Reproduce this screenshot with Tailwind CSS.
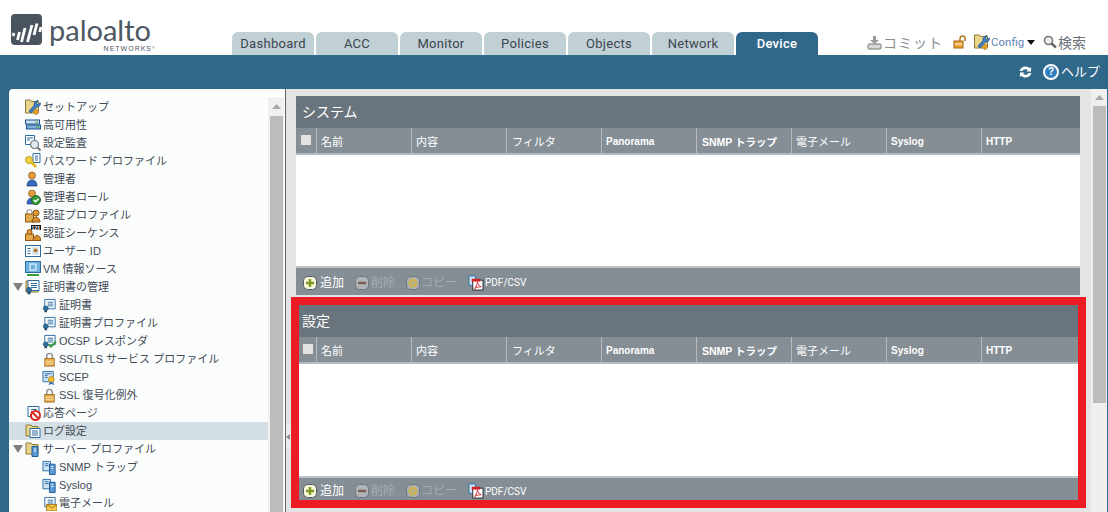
<!DOCTYPE html>
<html lang="ja">
<head>
<meta charset="utf-8"/>
<title>Device</title>
<script src="https://cdn.jsdelivr.net/npm/@tailwindcss/browser@4"></script>
</head>
<body class="w-[1108px] h-[512px] overflow-hidden bg-white font-['Liberation_Sans','Noto_Sans_CJK_JP',sans-serif] text-[11px] text-[#333]">
<svg class="hidden" width="0" height="0">
  <symbol id="folder" viewBox="0 0 16 16"><path d="M1 2h5l1 1.500h6V13H1z" fill="#e8d48a" stroke="#8a7a3a"/></symbol>
  <symbol id="wrench" viewBox="0 0 16 16"><path d="M.5 1h5l1 1.500h7V14H.5z" fill="#e8d48a" stroke="#8a7a3a"/><path d="M13 1.500l-1.500 3 1 1 3-1.500c0 3-2 4.500-4 4L6 14l-2-2 5-5.500C8.500 4 10.500 1.500 13 1.500z" fill="#3f7fc4" stroke="#1d4f8c" stroke-width=".7"/><path d="M8 13l3-3 3 3-3 3z" fill="#e3a021" stroke="#9a6b1e" stroke-width=".5"/></symbol>
  <symbol id="doc" viewBox="0 0 16 16"><path d="M3 1.500h11v10H3z" fill="#fff" stroke="#2b6ca3"/><path d="M6 4.500h6M6 6.500h6M6 8.500h6" stroke="#2b6ca3"/></symbol>
  <symbol id="cert" viewBox="0 0 16 16"><use href="#doc"/><circle cx="4" cy="11" r="2.600" fill="#2d6f9e" stroke="#173f60" stroke-width=".6"/><path d="M3 13l-.5 2.500L4 15l1.500.5L5 13" fill="#173f60"/></symbol>
  <symbol id="person" viewBox="0 0 16 16"><circle cx="7" cy="4.500" r="3.500" fill="#e39a3b" stroke="#8a5517" stroke-width=".7"/><path d="M2 15c0-4 2-6 5-6s5 2 5 6z" fill="#3668b8" stroke="#1e3f77" stroke-width=".7"/></symbol>
  <symbol id="lock" viewBox="0 0 16 16"><path d="M5 7V4.500a3 3 0 016 0V7" fill="none" stroke="#8b8b8b" stroke-width="1.500"/><rect x="3" y="7" width="10" height="8" fill="#eab04a" stroke="#9a6b1e"/><path d="M3.500 10h9M3.500 12.500h9" stroke="#fff" stroke-opacity=".6"/></symbol>
  <symbol id="server" viewBox="0 0 16 16"><path d="M1 1.500h8v10H1z" fill="#cfe3f5" stroke="#2b6ca3"/><path d="M3 4h4M3 6h4" stroke="#2b6ca3"/><path d="M8 4.500h6v11H8z" fill="#5b9bd5" stroke="#1f5a92"/><path d="M10 7h2M10 9h2" stroke="#fff"/></symbol>
  <symbol id="tri" viewBox="0 0 10 8"><path d="M0 0h10L5 8z" fill="#7f7f7f"/></symbol>
  <symbol id="plus" viewBox="0 0 14 14"><rect x=".5" y=".5" width="13" height="13" rx="4" fill="#f7f4dc" stroke="#4e5a66"/><path d="M7 3v8M3 7h8" stroke="#7a9a1c" stroke-width="2.400"/></symbol>
  <symbol id="minus" viewBox="0 0 14 14"><rect x=".5" y=".5" width="13" height="13" rx="4" fill="#b0b4b8" stroke="#6d7680"/><path d="M3 7h8" stroke="#7b5c50" stroke-width="2.400"/></symbol>
  <symbol id="copy" viewBox="0 0 14 14"><rect x=".5" y=".5" width="13" height="13" rx="4" fill="#a9adb0" stroke="#6d7680"/><circle cx="7" cy="7" r="4.500" fill="#cdb45a"/><circle cx="7" cy="7" r="1.500" fill="#a9adb0"/></symbol>
  <symbol id="pdf" viewBox="0 0 17 16"><path d="M1 .5h7v10H1z" fill="#cfe3f5" stroke="#2b6ca3"/><path d="M5 5h11v10.500H5z" fill="#fff" stroke="#222"/><path d="M4 3.500h9v3H4z" fill="#d3222a"/><path d="M7 14c2-3 3-5 3-7 1 3 2 4 4 5-3 0-5 .5-7 2z" fill="none" stroke="#d3222a"/></symbol>
</svg>

<!-- top bar -->
<header class="h-[55px] flex relative">
  <div class="w-[232px] shrink-0 flex pl-[11px] pt-[14px] gap-[7px]">
    <svg class="w-[31px] h-[31px]" viewBox="0 0 31 31"><rect width="31" height="31" rx="4" fill="#4a545e"/><g stroke="#fff" stroke-width="2.800"><path d="M3 19l-1 3M8.500 18l-2 8M14 14l-3.500 14M21 11l-4.500 17M26 9.500l-3 11.500M30 13l-1.300 5"/></g></svg>
    <div class="flex flex-col items-end">
      <span class="font-['Lato',sans-serif] text-[29px] leading-[29px] mt-[1px] text-[#4d5862]">paloalto</span>
      <span class="text-[7px] leading-[7px] mt-[1px] mr-[-5px] tracking-[1px] text-[#4d5862]">NETWORKS<sup class="text-[4px]">®</sup></span>
    </div>
  </div>
  <nav class="flex gap-[2px] items-end font-['Roboto',sans-serif] text-[13px] tracking-[0.3px] text-[#3c4650]">
    <a class="w-[82px] h-[23px] rounded-t-[6px] bg-[#c0d0d5] flex items-center justify-center">Dashboard</a>
    <a class="w-[82px] h-[23px] rounded-t-[6px] bg-[#c0d0d5] flex items-center justify-center">ACC</a>
    <a class="w-[82px] h-[23px] rounded-t-[6px] bg-[#c0d0d5] flex items-center justify-center">Monitor</a>
    <a class="w-[82px] h-[23px] rounded-t-[6px] bg-[#c0d0d5] flex items-center justify-center">Policies</a>
    <a class="w-[82px] h-[23px] rounded-t-[6px] bg-[#c0d0d5] flex items-center justify-center">Objects</a>
    <a class="w-[82px] h-[23px] rounded-t-[6px] bg-[#c0d0d5] flex items-center justify-center">Network</a>
    <a class="w-[82px] h-[23px] rounded-t-[6px] bg-[#30688a] text-white font-medium flex items-center justify-center">Device</a>
  </nav>
  <div class="flex items-end pb-[2px] ml-[49px] h-[55px] text-[#8b8f93]">
    <svg class="w-[15px] h-[15px] mb-[3px]" viewBox="0 0 15 15"><path d="M6 1h3v4h3L7.500 9 3 5h3z" fill="#9a9a9a"/><rect x="1" y="9" width="13" height="5" rx="1" fill="#d8d8d8" stroke="#777"/></svg>
    <span class="text-[14px] leading-[20px] w-[68px] ml-[1px] tracking-[1px]">コミット</span>
    <svg class="w-[14px] h-[14px] mb-[4px] ml-[2px]" viewBox="0 0 14 14"><path d="M7 6V3.500a2.500 2.500 0 015 0V6" fill="none" stroke="#b07a22" stroke-width="1.500"/><rect x="1" y="6" width="9" height="7" fill="#f0a32c" stroke="#a5661a"/><path d="M2 9h7" stroke="#fff"/></svg>
    <svg class="w-[16px] h-[16px] mb-[3px] ml-[7px]"><use href="#wrench"/></svg>
    <span class="font-['Roboto',sans-serif] text-[11.500px] leading-[20px] ml-[1px] text-[#5f86b5] w-[33px] mb-[1px]">Config</span>
    <svg class="w-[8px] h-[5px] mb-[8px] ml-[3px]" viewBox="0 0 8 5"><path d="M0 0h8L4 5z" fill="#111"/></svg>
    <svg class="w-[14px] h-[14px] mb-[4px] ml-[8px]" viewBox="0 0 14 14"><circle cx="5.500" cy="5.500" r="4" fill="#e8eef2" stroke="#777" stroke-width="1.600"/><path d="M8.500 8.500l4.500 4" stroke="#666" stroke-width="2.400"/></svg>
    <span class="text-[14px] leading-[20px] ml-[1px] text-[#6a7178]">検索</span>
  </div>
</header>

<!-- blue bar -->
<div class="h-[34px] bg-[#30688a] flex items-center justify-end pr-[8px] pb-[1px] gap-[11px] text-white">
  <svg class="w-[13px] h-[12px]" viewBox="0 0 14 12"><path d="M7 0c2 0 3.500.8 4.500 2L13 .500V5.500H8l1.500-1.500C8.800 3.300 8 3 7 3 5.500 3 4.300 3.800 3.800 5H.6C1.300 2 3.800 0 7 0zM7 12c-2 0-3.500-.8-4.500-2L1 11.500V6.500h5L4.500 8c.7.700 1.500 1 2.500 1 1.500 0 2.700-.8 3.200-2h3.200C12.700 10 10.200 12 7 12z" fill="#fff"/></svg>
  <div class="flex items-center gap-[2px]">
    <span class="w-[16px] h-[16px] rounded-full bg-[#2f7fc0] border-2 border-white text-[10px] leading-none font-bold flex items-center justify-center">?</span>
    <span class="text-[13px] leading-[16px]">ヘルプ</span>
  </div>
</div>

<div class="h-[423px] flex bg-[#30688a]">
  <!-- sidebar -->
  <aside class="ml-[9px] w-[276px] shrink-0 bg-white rounded-tl-[4px] pt-[8px] flex overflow-hidden border-r border-transparent">
    <div class="w-[259px] shrink-0 bg-[#fbfdfd] pt-[1px] text-[11px] leading-[18px] text-[#3f4a55]">
      <div class="h-[18px] flex items-center"><svg class="w-[16px] h-[16px] ml-[16px] mr-[2px]"><use href="#wrench"/></svg>セットアップ</div>
      <div class="h-[18px] flex items-center"><svg class="w-[16px] h-[16px] ml-[16px] mr-[2px]" viewBox="0 0 16 16"><rect x=".5" y="3" width="14" height="4" fill="#cfe3f5" stroke="#1d4f8c"/><rect x="1.500" y="8" width="14" height="4" fill="#7fb0dc" stroke="#1d4f8c"/><path d="M10 5h3M11 10h3" stroke="#5aa02c"/></svg>高可用性</div>
      <div class="h-[18px] flex items-center"><svg class="w-[16px] h-[16px] ml-[16px] mr-[2px]" viewBox="0 0 16 16"><path d="M.5.500h9v9h-9z" fill="#fff" stroke="#2b6ca3"/><path d="M2 3h6M2 5h3" stroke="#2b6ca3"/><circle cx="9.500" cy="9.500" r="4" fill="#dfeaf3" stroke="#777" stroke-width="1.200"/><path d="M12.500 12.500l3 3" stroke="#777" stroke-width="2"/></svg>設定監査</div>
      <div class="h-[18px] flex items-center"><svg class="w-[16px] h-[16px] ml-[16px] mr-[2px]" viewBox="0 0 16 16"><path d="M8 .500h7v9H8z" fill="#fff" stroke="#2b6ca3"/><path d="M10 3h3M10 5h3M10 7h3" stroke="#2b6ca3"/><circle cx="4" cy="7" r="3.500" fill="#f2d545" stroke="#b89a1c"/><path d="M6 9l5 5" stroke="#e0bb25" stroke-width="2.800"/></svg>パスワード プロファイル</div>
      <div class="h-[18px] flex items-center"><svg class="w-[16px] h-[16px] ml-[16px] mr-[2px]"><use href="#person"/></svg>管理者</div>
      <div class="h-[18px] flex items-center"><svg class="w-[16px] h-[16px] ml-[16px] mr-[2px]" viewBox="0 0 16 16"><use href="#person"/><circle cx="11" cy="11" r="4.500" fill="#3a9a3a" stroke="#1f6a1f"/><path d="M8.800 11l1.700 1.700 3-3" fill="none" stroke="#fff" stroke-width="1.400"/></svg>管理者ロール</div>
      <div class="h-[18px] flex items-center"><svg class="w-[16px] h-[16px] ml-[16px] mr-[2px]" viewBox="0 0 16 16"><path d="M2 7V4a3 3 0 015 0v3" fill="none" stroke="#888"/><rect x=".5" y="7" width="8" height="8" fill="#e3a84a" stroke="#8a5a17"/><circle cx="11" cy="6" r="3" fill="#e39a3b" stroke="#8a5517"/><path d="M7 15c0-3 2-5 4-5s4 2 4 5z" fill="#d98f30" stroke="#8a5517"/></svg>認証プロファイル</div>
      <div class="h-[18px] flex items-center"><svg class="w-[16px] h-[16px] ml-[16px] mr-[2px]" viewBox="0 0 16 16"><rect x="6" y="0" width="10" height="5" fill="#111"/><text x="6.500" y="4.700" font-size="5" font-weight="700" fill="#fff">123</text><rect x=".5" y="9" width="8" height="6.500" fill="#e3a84a" stroke="#8a5a17"/><circle cx="4.500" cy="7" r="2.500" fill="#e39a3b" stroke="#8a5517"/><path d="M8 15.500c0-3 2-5 4-5s4 2 4 5z" fill="#d98f30" stroke="#8a5517"/></svg>認証シーケンス</div>
      <div class="h-[18px] flex items-center"><svg class="w-[16px] h-[16px] ml-[16px] mr-[2px]" viewBox="0 0 16 16"><rect x=".5" y="2.500" width="15" height="11" fill="#fff" stroke="#2b6ca3"/><path d="M2.500 5.500h3M2.500 8h3M2.500 10.500h3" stroke="#2b6ca3"/><rect x="7" y="4" width="7" height="8" fill="#d8e7f3"/><circle cx="10.500" cy="7.500" r="2" fill="#b5762a"/></svg>ユーザー ID</div>
      <div class="h-[18px] flex items-center"><svg class="w-[16px] h-[16px] ml-[16px] mr-[2px]" viewBox="0 0 16 16"><rect x=".5" y=".5" width="15" height="11" fill="#6fb2e0" stroke="#2b6ca3"/><rect x="5" y="3" width="6" height="6" fill="none" stroke="#fff"/><path d="M2 14h12" stroke="#3aa03a" stroke-width="2"/></svg>VM 情報ソース</div>
      <div class="h-[18px] flex items-center"><svg class="w-[10px] h-[8px] ml-[4px] mr-[2px]"><use href="#tri"/></svg><svg class="w-[16px] h-[16px] mr-[2px]" viewBox="0 0 16 16"><use href="#folder"/><use href="#cert"/></svg>証明書の管理</div>
      <div class="h-[18px] flex items-center"><svg class="w-[15px] h-[15px] ml-[33px] mr-[2px]"><use href="#cert"/></svg>証明書</div>
      <div class="h-[18px] flex items-center"><svg class="w-[15px] h-[15px] ml-[33px] mr-[2px]"><use href="#cert"/></svg>証明書プロファイル</div>
      <div class="h-[18px] flex items-center"><svg class="w-[15px] h-[15px] ml-[33px] mr-[2px]" viewBox="0 0 16 16"><use href="#cert"/><path d="M7 11l2.500 2.500L15 8" fill="none" stroke="#3a9a3a" stroke-width="2"/></svg>OCSP レスポンダ</div>
      <div class="h-[18px] flex items-center"><svg class="w-[15px] h-[15px] ml-[33px] mr-[2px]"><use href="#lock"/></svg>SSL/TLS サービス プロファイル</div>
      <div class="h-[18px] flex items-center"><svg class="w-[15px] h-[15px] ml-[33px] mr-[2px]" viewBox="0 0 16 16"><path d="M1 1.500h11v11H1z" fill="#cfe3f5" stroke="#2b6ca3"/><path d="M3 4h7M3 6h3M3 8h3" stroke="#2b6ca3"/><circle cx="10" cy="10" r="3" fill="#f2c230" stroke="#b5861a"/><path d="M8 13l-1 3 3-1 3 1-1-3" fill="#3668b8"/></svg>SCEP</div>
      <div class="h-[18px] flex items-center"><svg class="w-[15px] h-[15px] ml-[33px] mr-[2px]"><use href="#lock"/></svg>SSL 復号化例外</div>
      <div class="h-[18px] flex items-center"><svg class="w-[16px] h-[16px] ml-[16px] mr-[2px]" viewBox="0 0 16 16"><use href="#doc"/><circle cx="10.500" cy="10.500" r="4.500" fill="#fff" stroke="#d9261c" stroke-width="2"/><path d="M7.500 7.500l6 6" stroke="#d9261c" stroke-width="2"/></svg>応答ページ</div>
      <div class="h-[18px] flex items-center bg-[#d5e0e6]"><svg class="w-[16px] h-[16px] ml-[16px] mr-[2px]" viewBox="0 0 16 16"><use href="#folder"/><path d="M5 5.500h10v9H5z" fill="#fff" stroke="#2b6ca3"/><path d="M7 8h6M7 10h6M7 12h6" stroke="#2b6ca3"/></svg>ログ設定</div>
      <div class="h-[18px] flex items-center"><svg class="w-[10px] h-[8px] ml-[4px] mr-[2px]"><use href="#tri"/></svg><svg class="w-[16px] h-[16px] mr-[2px]" viewBox="0 0 16 16"><use href="#folder"/><path d="M7 5.500h6v10H7z" fill="#5b9bd5" stroke="#1f5a92"/><path d="M9 8h2M9 10h2" stroke="#fff"/></svg>サーバー プロファイル</div>
      <div class="h-[18px] flex items-center"><svg class="w-[15px] h-[15px] ml-[33px] mr-[2px]"><use href="#server"/></svg>SNMP トラップ</div>
      <div class="h-[18px] flex items-center"><svg class="w-[15px] h-[15px] ml-[33px] mr-[2px]"><use href="#server"/></svg>Syslog</div>
      <div class="h-[18px] flex items-center"><svg class="w-[15px] h-[15px] ml-[33px] mr-[2px]" viewBox="0 0 16 16"><use href="#doc"/><rect x="5" y="9" width="11" height="7" fill="#f5c84a" stroke="#a5761a"/><path d="M5 9l5.500 4L16 9" fill="none" stroke="#a5761a"/></svg>電子メール</div>
    </div>
    <div class="w-[17px] bg-[#f0f0f0] pl-[2px] pr-[2px] flex flex-col items-center">
      <svg class="w-[9px] h-[5px] my-[7px] shrink-0" viewBox="0 0 9 5"><path d="M0 5h9L4.500 0z" fill="#a6a6a6"/></svg>
      <div class="w-[13px] flex-1 bg-[#bcbcbc]"></div>
    </div>
  </aside>

  <!-- content -->
  <main class="w-[823px] shrink-0 bg-[#e4e4e4] border-l border-[#666] flex relative">
    <div class="absolute left-0 top-[336px] w-[5px] h-[24px] bg-[#ececec] flex items-center"><svg class="w-[4px] h-[6px]" viewBox="0 0 4 6"><path d="M4 0v6L0 3z" fill="#8a8a8a"/></svg></div>
    <div class="pl-[5px] pt-[7px] w-[805px] shrink-0">
      <section class="ml-[5px] w-[784px] h-[199px] flex flex-col">
        <h2 class="h-[32px] shrink-0 bg-[#6a747c] text-white text-[14px] leading-[32px] pl-[6px]">システム</h2>
        <div class="h-[27px] shrink-0 bg-[#868e95] border-b-2 border-[#b5babf] flex text-white text-[11px] leading-[28px]">
          <div class="w-[21px] shrink-0 border-r border-[#b5babf] flex items-center justify-center"><span class="w-[12px] h-[12px] bg-[#e0e2e4] border border-[#8f8f8f] mb-[2px]"></span></div>
          <div class="w-[95px] shrink-0 border-r border-[#b5babf] pl-[4px]">名前</div>
          <div class="w-[95px] shrink-0 border-r border-[#b5babf] pl-[4px]">内容</div>
          <div class="w-[95px] shrink-0 border-r border-[#b5babf] pl-[5px]">フィルタ</div>
          <div class="w-[95px] shrink-0 border-r border-[#b5babf] pl-[4px] text-[10px] font-bold">Panorama</div>
          <div class="w-[95px] shrink-0 border-r border-[#b5babf] pl-[5px] text-[10.500px] font-bold">SNMP トラップ</div>
          <div class="w-[95px] shrink-0 border-r border-[#b5babf] pl-[4px]">電子メール</div>
          <div class="w-[95px] shrink-0 border-r border-[#b5babf] pl-[4px] text-[10px] font-bold">Syslog</div>
          <div class="flex-1 pl-[4px] text-[10px] font-bold">HTTP</div>
        </div>
        <div class="flex-1 bg-white border-b-2 border-[#c0c4c8]"></div>
        <div class="h-[27px] shrink-0 bg-[#868e95] flex items-center pl-[7px] pt-[2px] text-[12px] text-white">
          <svg class="w-[14px] h-[14px] mr-[3px]"><use href="#plus"/></svg><span class="w-[35px]">追加</span>
          <svg class="w-[14px] h-[14px] mr-[2px]"><use href="#minus"/></svg><span class="w-[35px] text-[#a5abb0]">削除</span>
          <svg class="w-[14px] h-[14px] mr-[1px]"><use href="#copy"/></svg><span class="w-[47px] text-[#a5abb0]">コピー</span>
          <svg class="w-[16px] h-[16px] mr-[1px]"><use href="#pdf"/></svg><span class="font-['Roboto',sans-serif] text-[10px]">PDF/CSV</span>
        </div>
      </section>

      <section class="mt-[2px] w-[795px] h-[211px] border-8 border-[#ed1c24] flex flex-col">
        <h2 class="h-[32px] shrink-0 bg-[#6a747c] text-white text-[14px] leading-[32px] pl-[3px]">設定</h2>
        <div class="h-[27px] shrink-0 bg-[#868e95] border-b-2 border-[#b5babf] flex text-white text-[11px] leading-[28px]">
          <div class="w-[18px] shrink-0 border-r border-[#b5babf] flex items-center justify-center"><span class="w-[12px] h-[12px] bg-[#e0e2e4] border border-[#8f8f8f] mb-[2px]"></span></div>
          <div class="w-[95px] shrink-0 border-r border-[#b5babf] pl-[4px]">名前</div>
          <div class="w-[95px] shrink-0 border-r border-[#b5babf] pl-[4px]">内容</div>
          <div class="w-[95px] shrink-0 border-r border-[#b5babf] pl-[5px]">フィルタ</div>
          <div class="w-[95px] shrink-0 border-r border-[#b5babf] pl-[4px] text-[10px] font-bold">Panorama</div>
          <div class="w-[95px] shrink-0 border-r border-[#b5babf] pl-[5px] text-[10.500px] font-bold">SNMP トラップ</div>
          <div class="w-[95px] shrink-0 border-r border-[#b5babf] pl-[4px]">電子メール</div>
          <div class="w-[95px] shrink-0 border-r border-[#b5babf] pl-[4px] text-[10px] font-bold">Syslog</div>
          <div class="flex-1 pl-[4px] text-[10px] font-bold">HTTP</div>
        </div>
        <div class="flex-1 bg-white border-b-2 border-[#c0c4c8]"></div>
        <div class="h-[22px] shrink-0 bg-[#868e95] flex items-center pl-[4px] pt-[4px] text-[12px] text-white">
          <svg class="w-[14px] h-[14px] mr-[3px]"><use href="#plus"/></svg><span class="w-[35px]">追加</span>
          <svg class="w-[14px] h-[14px] mr-[2px]"><use href="#minus"/></svg><span class="w-[35px] text-[#a5abb0]">削除</span>
          <svg class="w-[14px] h-[14px] mr-[1px]"><use href="#copy"/></svg><span class="w-[47px] text-[#a5abb0]">コピー</span>
          <svg class="w-[16px] h-[16px] mr-[1px]"><use href="#pdf"/></svg><span class="font-['Roboto',sans-serif] text-[10px]">PDF/CSV</span>
        </div>
      </section>
    </div>
    <!-- page scrollbar -->
    <div class="w-[16px] bg-[#efefef] pl-[1px] flex flex-col items-center">
      <svg class="w-[9px] h-[5px] mt-[6px] mb-[6px] shrink-0" viewBox="0 0 9 5"><path d="M0 5h9L4.500 0z" fill="#a6a6a6"/></svg>
      <div class="w-[13px] h-[297px] bg-[#bcbcbc]"></div>
    </div>
    <div class="w-[1px] bg-[#2f6f9f]"></div>
  </main>
</div>
</body>
</html>
